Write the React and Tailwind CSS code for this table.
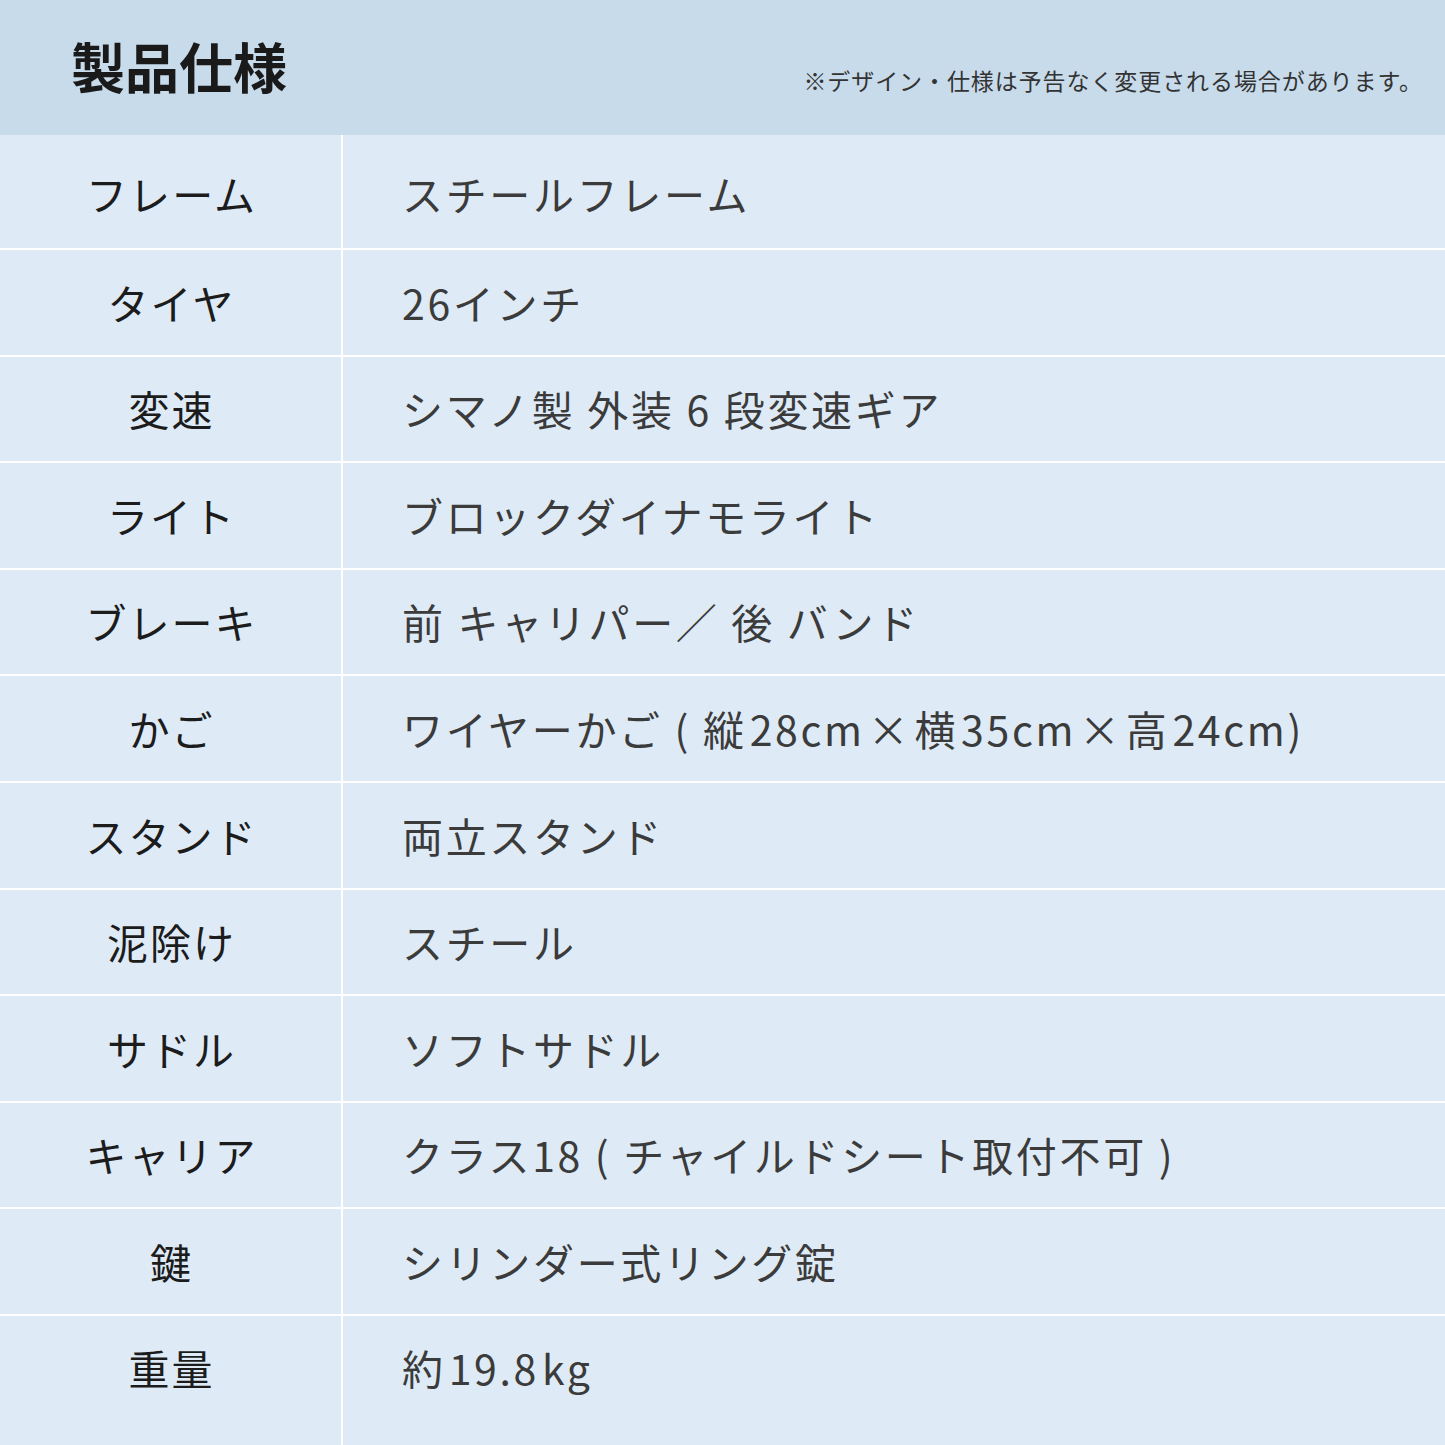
import React from 'react';

// "|" marks a narrow gap (smaller than a regular space)
const specs = [
    { label: "フレーム", value: "スチールフレーム" },
    { label: "タイヤ", value: "26インチ" },
    { label: "変速", value: "シマノ製 外装 6 段変速ギア" },
    { label: "ライト", value: "ブロックダイナモライト" },
    { label: "ブレーキ", value: "前 キャリパー／ 後 バンド" },
    { label: "かご", value: "ワイヤーかご ( 縦|28cm|×|横|35cm|×|高|24cm)" },
    { label: "スタンド", value: "両立スタンド" },
    { label: "泥除け", value: "スチール" },
    { label: "サドル", value: "ソフトサドル" },
    { label: "キャリア", value: "クラス18 ( チャイルドシート取付不可 )" },
    { label: "鍵", value: "シリンダー式リング錠" },
    { label: "重量", value: "約|19.8|kg" },
];

function Value({ text }) {
    const parts = text.split("|");
    return parts.map((p, i) => (
        <React.Fragment key={i}>
            {i > 0 && <span className="inline-block w-[3px]" />}
            {p}
        </React.Fragment>
    ));
}

function Row({ spec, index, total }) {
    const first = index === 0;
    const last = index === total - 1;
    const rowClass = first
        ? "h-[113px]"
        : last
        ? "flex-1 border-t-2 border-white"
        : "h-[106.6px] border-t-2 border-white";

    return (
        <div className={"flex w-full bg-[#deebf7] " + rowClass}>
            <div className="w-[343px] shrink-0 border-r-2 border-white">
                <div className={(first ? "h-full pt-[4px]" : "h-[104.6px]") + " flex items-center justify-center"}>
                    <span className="text-[41px] tracking-[0.05em] text-[#1c1c1c] pl-[0.05em]">{spec.label}</span>
                </div>
            </div>
            <div className="flex-1">
                <div className={(first ? "h-full pt-[4px]" : "h-[104.6px]") + " flex items-center pl-[59px]"}>
                    <span className="text-[41px] tracking-[0.065em] text-[#3b3b3b] whitespace-pre">
                        <Value text={spec.value} />
                    </span>
                </div>
            </div>
        </div>
    );
}

export default function App() {
    return (
        <div
            className="w-[1445px] h-[1445px] flex flex-col overflow-hidden"
            style={{ fontFamily: '"Noto Sans CJK JP", "Noto Sans", sans-serif' }}
        >
            <div className="h-[135px] shrink-0 bg-[#c8dbeb] flex items-center justify-between pl-[71px] pr-[22px]">
                <h1 className="text-[54px] font-bold text-[#1a1a1a] leading-none mb-[4px]">製品仕様</h1>
                <p className="text-[23px] tracking-[0.04em] text-[#333] mt-[26px]">※デザイン・仕様は予告なく変更される場合があります。</p>
            </div>
            {specs.map((spec, i) => (
                <Row key={i} spec={spec} index={i} total={specs.length} />
            ))}
        </div>
    );
}
